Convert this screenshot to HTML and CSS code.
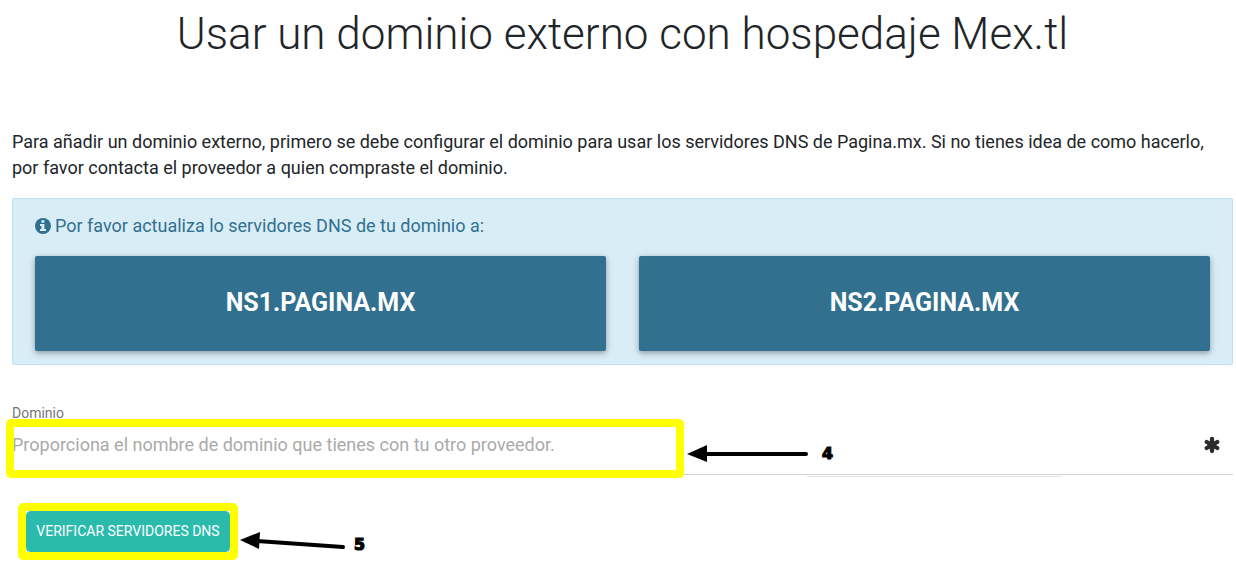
FILE: index.html
```html
<!DOCTYPE html>
<html lang="es">
<head>
  <meta charset="UTF-8" />
  <meta name="viewport" content="width=device-width, initial-scale=1.0"/>
  <title>Usar un dominio externo</title>
  <link rel="stylesheet" href="styles.css">
</head>
<body>
<main class="page">
  <h1>Usar un dominio externo con hospedaje Mex.tl</h1>
  <p class="intro">Para añadir un dominio externo, primero se debe configurar el dominio para usar los servidores DNS de Pagina.mx. Si no tienes idea de como hacerlo, por favor contacta el proveedor a quien compraste el dominio.</p>

  <section class="alert">
    <p class="alert-title">
      <svg class="info" viewBox="0 0 16 16"><circle cx="8" cy="8" r="8"/><path d="M6.400 2.200h3v2.500h-3zM5 6h4.400v5H11v2H5v-2h1.400V8H5z"/></svg>
      <span>Por favor actualiza lo servidores DNS de tu dominio a:</span>
    </p>
    <div class="servers">
      <div class="server">NS1.PAGINA.MX</div>
      <div class="server">NS2.PAGINA.MX</div>
    </div>
  </section>

  <form>
    <label for="domain">Dominio</label>
    <div class="field">
      <input type="text" id="domain" placeholder="Proporciona el nombre de dominio que tienes con tu otro proveedor." />
      <svg class="required" viewBox="0 0 16 16"><path d="M8 2v12M2.700 5l10.600 6M2.700 11l10.600-6"/></svg>
    </div>
    <button type="button" class="verify">VERIFICAR SERVIDORES DNS</button>
  </form>
</main>

<!-- step marks over the form -->
<svg class="marks" viewBox="0 0 1236 571">
  <path class="line" d="M807 476.5h254"/>
  <rect class="frame" x="10" y="423" width="670" height="51" rx="1"/>
  <rect class="frame" x="22" y="507" width="212" height="49" rx="1"/>
  <path class="arrow" d="M704 454H806M257 541L343 547"/>
  <path class="head" d="M687 454l20-9v17zM240 540l20-8-1 17z"/>
  <text x="822" y="458.500" textLength="11" lengthAdjust="spacingAndGlyphs">4</text>
  <text x="354" y="549.500" textLength="11" lengthAdjust="spacingAndGlyphs">5</text>
</svg>
</body>
</html>
```
FILE: styles.css
```css
* { box-sizing: border-box; }
body { font-family: Roboto, sans-serif; font-size: 18px; line-height: 26px; color: #212529; background: #fff; margin: 0; overflow: hidden; }
.page { padding: 4px 3px 0 12px; }
h1 { font-size: 44px; font-weight: 300; line-height: 60px; text-align: center; margin: 0 0 65px; }
.intro { margin: 0 0 17px; }
.alert { height: 167px; padding: 14px 22px; background: #d9edf7; border: 1px solid #bce0ef; border-radius: 2px; color: #31708f; }
.alert-title { display: flex; align-items: center; gap: 4px; margin: 0 0 17px; }
.info { width: 16px; height: 16px; fill: #31708f; }
.info path { fill: #d9edf7; }
.servers { display: flex; gap: 33px; }
.server { flex: 1; height: 95px; line-height: 94px; text-align: center; font-size: 25px; font-weight: bold; color: #fff; background: #31708f; border-radius: 2px; box-shadow: 0 2px 5px rgba(0,0,0,0.26), 0 2px 10px rgba(0,0,0,0.12); }
label { display: block; margin-top: 38px; font-size: 14px; line-height: 20px; color: #757575; }
.field { display: flex; align-items: center; height: 52px; padding: 0 13px 8px 0; border-bottom: 1px solid #d2d2d2; }
.field input { flex: 1; padding: 0; border: none; outline: none; background: none; font: inherit; }
.field input::placeholder { color: #aaa; opacity: 1; }
.required { width: 16px; height: 16px; fill: none; stroke: #292b2c; stroke-width: 4.3; stroke-linecap: butt; overflow: visible; }
.required path { stroke-linecap: round; }
.verify { display: block; width: 204px; height: 41px; margin: 36px 0 0 14px; padding: 0 0 2px; border: none; border-radius: 5px; font-family: inherit; font-size: 14px; color: #fff; background: #2bbbad; box-shadow: 0 2px 5px rgba(0,0,0,0.16), 0 2px 10px rgba(0,0,0,0.12); }
.marks { position: absolute; top: 0; left: 0; width: 1236px; height: 571px; pointer-events: none; }
.marks text { font-family: "DejaVu Sans", sans-serif; font-weight: bold; font-size: 15px; stroke: #000; stroke-width: 1.2; }
.line { stroke: #e5e5e5; }
.frame { fill: none; stroke: #ff0; stroke-width: 8; stroke-linejoin: round; }
.arrow { stroke: #000; stroke-width: 4; stroke-linecap: round; }
```
